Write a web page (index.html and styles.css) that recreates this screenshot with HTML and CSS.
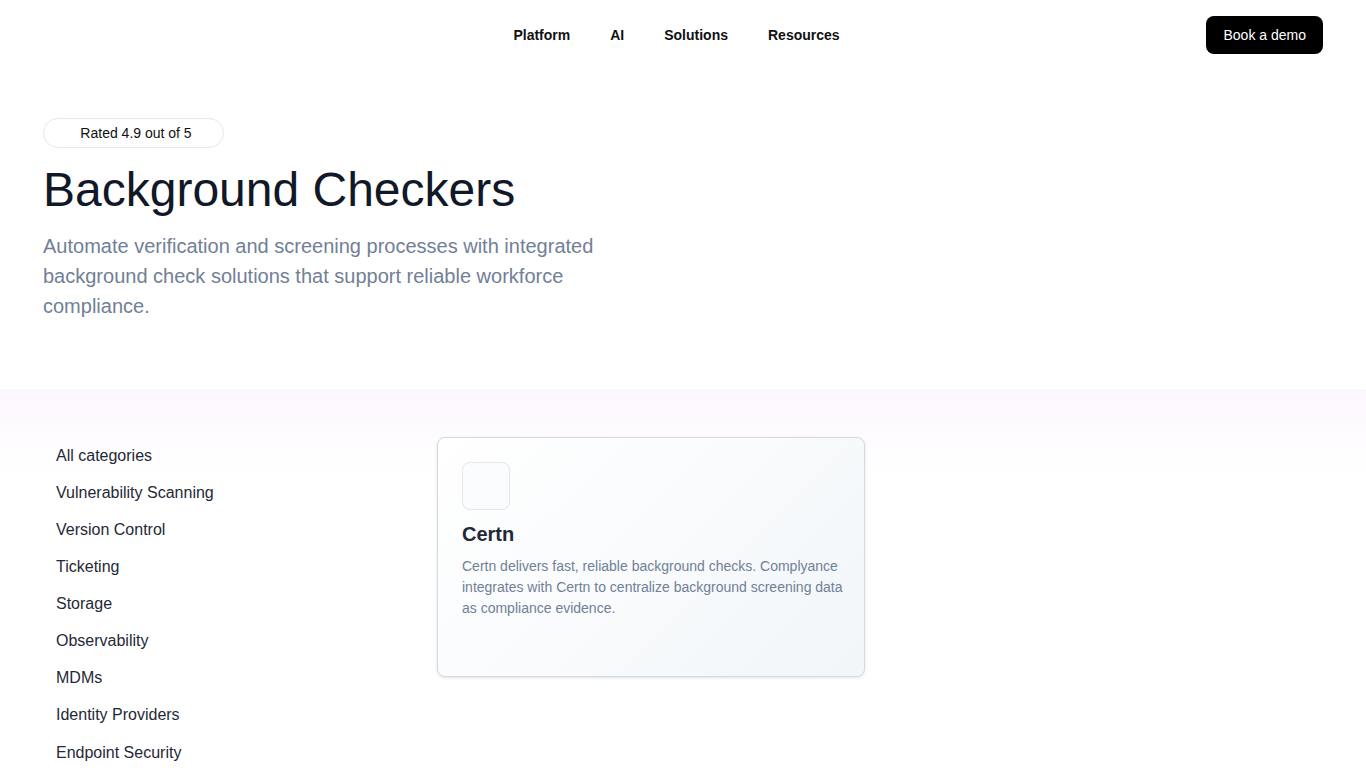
FILE: index.html
```html
<!DOCTYPE html>
<html lang="en">
<head>
<meta charset="utf-8">
<title>Background Checkers</title>
<link rel="stylesheet" href="styles.css">
</head>
<body>
<header class="header">
  <div class="header-left"></div>
  <nav class="nav">
    <a class="nav-link" href="#">Platform</a>
    <a class="nav-link" href="#">AI</a>
    <a class="nav-link" href="#">Solutions</a>
    <a class="nav-link" href="#">Resources</a>
  </nav>
  <div class="header-right">
    <a class="demo-btn" href="#">Book a demo</a>
  </div>
</header>

<section class="hero">
  <div class="rating">Rated 4.9 out of 5</div>
  <h1 class="title">Background Checkers</h1>
  <p class="subtitle">Automate verification and screening processes with integrated background check solutions that support reliable workforce compliance.</p>
</section>

<section class="listing">
  <div class="listing-inner">
    <ul class="categories">
      <li class="category">All categories</li>
      <li class="category">Vulnerability Scanning</li>
      <li class="category">Version Control</li>
      <li class="category">Ticketing</li>
      <li class="category">Storage</li>
      <li class="category">Observability</li>
      <li class="category">MDMs</li>
      <li class="category">Identity Providers</li>
      <li class="category">Endpoint Security</li>
    </ul>
    <div class="cards">
      <article class="card">
        <div class="card-logo"></div>
        <h2 class="card-title">Certn</h2>
        <p class="card-text">Certn delivers fast, reliable background checks. Complyance integrates with Certn to centralize background screening data as compliance evidence.</p>
      </article>
    </div>
  </div>
</section>
</body>
</html>
```

FILE: styles.css
```css
* { box-sizing: border-box; }
html, body { margin: 0; padding: 0; background: #ffffff; }
body {
  font-family: "Liberation Sans", Arial, sans-serif;
  color: #111827;
}

.header {
  height: 70px;
  padding: 0 43px;
  display: grid;
  grid-template-columns: 1fr auto 1fr;
  align-items: center;
}
.nav {
  display: flex;
  gap: 40px;
  margin-right: 13px;
}
.nav-link {
  font-size: 14px;
  font-weight: 700;
  color: #111111;
  text-decoration: none;
  line-height: 20px;
}
.header-right {
  display: flex;
  justify-content: flex-end;
}
.demo-btn {
  display: inline-flex;
  align-items: center;
  height: 38px;
  padding: 0 17px 0 18px;
  background: #000000;
  color: #ffffff;
  font-size: 14px;
  border-radius: 8px;
  text-decoration: none;
}

.hero {
  padding: 48px 43px 68px;
}
.rating {
  width: 181px;
  height: 30px;
  padding-left: 5px;
  border: 1px solid #e5e7eb;
  border-radius: 999px;
  display: flex;
  align-items: center;
  justify-content: center;
  font-size: 14px;
  color: #111111;
}
.title {
  margin: 13px 0 0;
  font-size: 48px;
  font-weight: 400;
  line-height: 57.6px;
  color: #111827;
}
.subtitle {
  margin: 12px 0 0;
  max-width: 576px;
  font-size: 20px;
  line-height: 30px;
  color: #718096;
}

.listing {
  background: linear-gradient(to bottom, #fcf7fe 0px, #ffffff 85px);
  padding: 48px 43px 40px;
}
.listing-inner {
  display: flex;
}
.categories {
  list-style: none;
  margin: 0;
  padding: 1px 0 0;
  width: 394px;
  flex-shrink: 0;
}
.category {
  padding: 6px 13px 7.125px;
  font-size: 16px;
  line-height: 24px;
  color: #1f2937;
}
.cards {
  flex: 1;
  display: grid;
  grid-template-columns: repeat(2, 1fr);
  gap: 30px;
  align-items: start;
}
.card {
  height: 240px;
  border: 1px solid #d5d9e0;
  border-radius: 8px;
  padding: 24px 18px 24px 24px;
  background: linear-gradient(135deg, #ffffff 0%, #f2f6f9 100%);
  box-shadow: 0 1px 3px rgba(15, 23, 42, 0.12);
}
.card-logo {
  width: 48px;
  height: 48px;
  border: 1px solid #e5e7eb;
  border-radius: 8px;
  background: #fbfcfd;
}
.card-title {
  margin: 10px 0 0;
  font-size: 20px;
  font-weight: 700;
  line-height: 28px;
  color: #1f2937;
}
.card-text {
  margin: 8px 0 0;
  font-size: 14px;
  line-height: 21px;
  color: #718096;
}
```
